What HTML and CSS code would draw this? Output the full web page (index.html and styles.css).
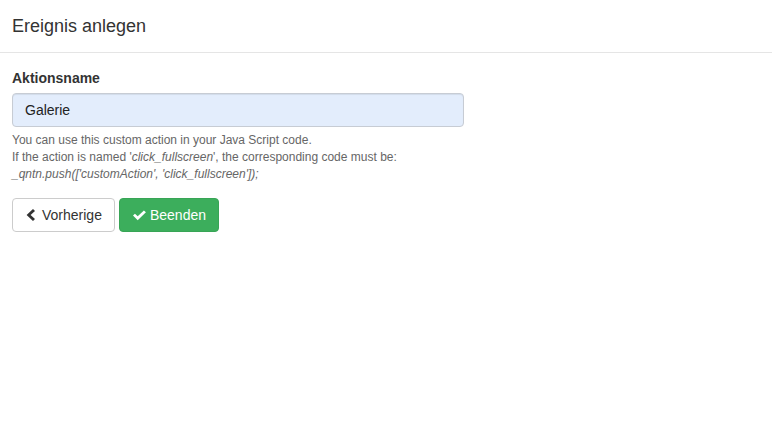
FILE: index.html
```html
<!DOCTYPE html>
<html>
<head>
<meta charset="utf-8">
<link rel="stylesheet" href="styles.css">
</head>
<body>
<div class="modal">
  <div class="modal-header">
    <h4 class="modal-title">Ereignis anlegen</h4>
  </div>
  <div class="modal-body">
    <div class="form-group">
      <label class="control-label">Aktionsname</label>
      <input class="form-control" type="text" value="Galerie">
      <div class="help-block">
        You can use this custom action in your Java Script code.<br>
        If the action is named '<i>click_fullscreen</i>', the corresponding code must be:<br>
        <i>_qntn.push(['customAction', 'click_fullscreen']);</i>
      </div>
    </div>
    <div class="buttons">
      <button class="btn btn-default"><svg class="icon icon-prev" viewBox="0 0 9 12" width="9" height="12"><polygon points="9,1.9 7,0 0.6,6 7,12 9,10.1 4.6,6" fill="#333"/></svg>Vorherige</button>
      <button class="btn btn-success"><svg class="icon icon-ok" viewBox="0 0 14 11" width="14" height="11"><polygon points="0,5.6 2.1,3.5 5.1,6.4 11.8,0 14,2.1 5.1,10.6" fill="#fff"/></svg>Beenden</button>
    </div>
  </div>
</div>
</body>
</html>
```
FILE: styles.css
```css
html, body {
  margin: 0;
  padding: 0;
  background: #fff;
}
body {
  font-family: "Liberation Sans", Arial, Helvetica, sans-serif;
  font-size: 14px;
  line-height: 1.42857;
  color: #333;
}
.modal-header {
  padding: 16px 12px 15px 12px;
  border-bottom: 1px solid #e5e5e5;
}
.modal-title {
  margin: 0;
  font-size: 18px;
  font-weight: 500;
  line-height: 21px;
  color: #333;
}
.modal-body {
  padding: 15px 12px;
}
.form-group {
  margin-bottom: 15px;
}
.control-label {
  display: block;
  font-weight: bold;
  margin-bottom: 5px;
  line-height: 20px;
}
.form-control {
  display: block;
  box-sizing: border-box;
  width: 452px;
  height: 34px;
  padding: 6px 12px;
  font-family: inherit;
  font-size: 14px;
  color: #222;
  background: #e3edfc;
  border: 1px solid #c7ccd4;
  border-radius: 4px;
  box-shadow: inset 0 1px 1px rgba(0,0,0,0.075);
  margin: 0;
}
.help-block {
  margin-top: 5px;
  font-size: 12px;
  line-height: 17px;
  color: #666;
}
.buttons {
  display: flex;
  gap: 4px;
}
.btn {
  display: inline-flex;
  align-items: center;
  box-sizing: border-box;
  height: 34px;
  padding: 6px 12px;
  font-family: inherit;
  font-size: 14px;
  border-radius: 4px;
  border: 1px solid #ccc;
  cursor: pointer;
}
.btn-default {
  background: #fff;
  color: #333;
  width: 103px;
  padding-left: 13px;
}
.icon-prev {
  margin-right: 7px;
}
.btn-success {
  background: #3cae5c;
  border-color: #38a556;
  color: #fff;
  width: 100px;
  padding-left: 13px;
}
.icon-ok {
  margin-right: 4px;
}
```
